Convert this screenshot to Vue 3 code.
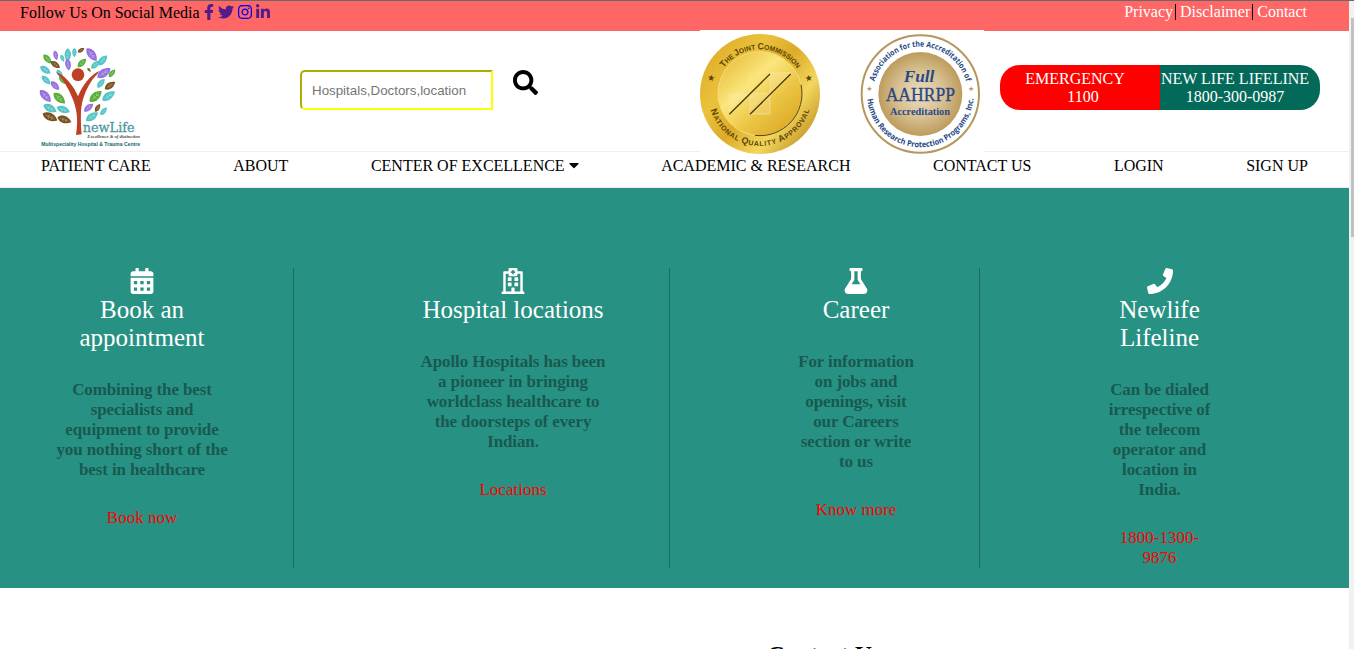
<script setup>
const social = [
  { name: 'facebook', w: 320, cls: 'visited', d: 'M279.14 288l14.22-92.66h-88.91v-60.13c0-25.35 12.42-50.06 52.24-50.06h40.42V6.26S260.43 0 225.36 0c-73.22 0-121.08 44.38-121.08 124.72v70.62H22.89V288h81.39v224h100.17V288z' },
  { name: 'twitter', w: 512, cls: 'visited', d: 'M459.37 151.716c.325 4.548.325 9.097.325 13.645 0 138.72-105.583 298.558-298.558 298.558-59.452 0-114.68-17.219-161.137-47.106 8.447.974 16.568 1.299 25.34 1.299 49.055 0 94.213-16.568 130.274-44.832-46.132-.975-84.792-31.188-98.112-72.772 6.498.974 12.995 1.624 19.818 1.624 9.421 0 18.843-1.3 27.614-3.573-48.081-9.747-84.143-51.98-84.143-102.985v-1.299c13.969 7.797 30.214 12.67 47.431 13.319-28.264-18.843-46.781-51.005-46.781-87.391 0-19.492 5.197-37.36 14.294-52.954 51.655 63.675 129.3 105.258 216.365 109.807-1.624-7.797-2.599-15.918-2.599-24.04 0-57.828 46.782-104.934 104.934-104.934 30.213 0 57.502 12.67 76.67 33.137 23.715-4.548 46.456-13.32 66.599-25.34-7.798 24.366-24.366 44.833-46.132 57.827 21.117-2.273 41.584-8.122 60.426-16.243-14.292 20.791-32.161 39.308-52.628 54.253z' },
  { name: 'instagram', w: 448, cls: 'link', d: 'M224.1 141c-63.6 0-114.9 51.3-114.9 114.9s51.3 114.9 114.9 114.9S339 319.500 339 255.900 287.700 141 224.100 141zm0 189.600c-41.100 0-74.700-33.500-74.700-74.700s33.500-74.700 74.700-74.700 74.700 33.500 74.700 74.700-33.600 74.700-74.700 74.700zm146.400-194.300c0 14.900-12 26.800-26.800 26.800-14.900 0-26.800-12-26.800-26.800s12-26.800 26.800-26.800 26.800 12 26.800 26.800zm76.100 27.200c-1.700-35.900-9.900-67.700-36.200-93.900-26.200-26.200-58-34.400-93.900-36.200-37-2.100-147.900-2.100-184.900 0-35.800 1.700-67.600 9.900-93.900 36.100s-34.400 58-36.200 93.900c-2.100 37-2.100 147.900 0 184.900 1.700 35.900 9.900 67.700 36.200 93.900s58 34.400 93.900 36.200c37 2.100 147.900 2.100 184.900 0 35.900-1.700 67.700-9.900 93.900-36.200 26.200-26.200 34.400-58 36.200-93.900 2.100-37 2.100-147.800 0-184.800zM398.800 388c-7.800 19.600-22.900 34.700-42.600 42.600-29.500 11.700-99.500 9-132.100 9s-102.700 2.600-132.100-9c-19.600-7.800-34.700-22.900-42.600-42.600-11.700-29.500-9-99.500-9-132.100s-2.600-102.700 9-132.100c7.800-19.600 22.900-34.700 42.600-42.600 29.500-11.700 99.500-9 132.100-9s102.700-2.600 132.100 9c19.600 7.800 34.700 22.900 42.600 42.600 11.700 29.500 9 99.500 9 132.100s2.700 102.700-9 132.100z' },
  { name: 'linkedin', w: 448, cls: 'visited', d: 'M100.28 448H7.4V148.9h92.88zM53.79 108.1C24.09 108.1 0 83.5 0 53.8a53.79 53.79 0 0 1 107.58 0c0 29.7-24.1 54.3-53.79 54.3zM447.9 448h-92.68V302.4c0-34.7-.7-79.2-48.29-79.2-48.29 0-55.69 37.7-55.69 76.7V448h-92.78V148.9h89.08v40.8h1.3c12.4-23.5 42.69-48.3 87.88-48.3 94 0 111.28 61.9 111.28 142.3V448z' },
]

const nav = ['PATIENT CARE', 'ABOUT', 'CENTER OF EXCELLENCE', 'ACADEMIC & RESEARCH', 'CONTACT US', 'LOGIN', 'SIGN UP']

const T = '#53c4c6', P = '#9570dd', G = '#57ae3b', B = '#74501d'
/* x, y, angle, length, colour */
const leaves = [
  [52, 72, 50, 34, G], [77, 61, 78, 28, P], [97, 70, 65, 22, T], [113, 60, 90, 38, T], [133, 53, 90, 26, T],
  [153, 46, -30, 22, B], [185, 59, 52, 46, P], [46, 105, 35, 36, T], [76, 89, 35, 32, B], [114, 89, 80, 34, P],
  [89, 116, 55, 28, T], [48, 135, 45, 34, T], [75, 152, 45, 34, P], [99, 136, 45, 32, G], [156, 84, -45, 34, G],
  [177, 105, 50, 14, B], [196, 89, -45, 32, T], [218, 76, -48, 38, T], [196, 119, -35, 16, T], [222, 114, -35, 46, P],
  [246, 115, -50, 28, G], [213, 145, -50, 32, T], [240, 152, -35, 36, B], [46, 183, 48, 46, P], [88, 190, 42, 44, G],
  [60, 220, 28, 42, T], [100, 224, 20, 40, T], [60, 246, 25, 46, B], [103, 254, 20, 42, B],
  [197, 184, -42, 46, G], [236, 183, -35, 44, T], [176, 218, -40, 34, P], [203, 219, -60, 26, B], [221, 229, -50, 28, T], [186, 245, -35, 42, T],
]

const cards = [
  {
    key: 'appointment', title: ['Book an', 'appointment'],
    text: ['Combining the best', 'specialists and', 'equipment to provide', 'you nothing short of the', 'best in healthcare'],
    link: ['Book now'],
  },
  {
    key: 'locations', title: ['Hospital locations'],
    text: ['Apollo Hospitals has been', 'a pioneer in bringing', 'worldclass healthcare to', 'the doorsteps of every', 'Indian.'],
    link: ['Locations'],
  },
  {
    key: 'career', title: ['Career'],
    text: ['For information', 'on jobs and', 'openings, visit', 'our Careers', 'section or write', 'to us'],
    link: ['Know more'],
  },
  {
    key: 'lifeline', title: ['Newlife', 'Lifeline'],
    text: ['Can be dialed', 'irrespective of', 'the telecom', 'operator and', 'location in', 'India.'],
    link: ['1800-1300-', '9876'],
  },
]
</script>

<template>
  <div class="window">
    <div class="page">
      <div class="topbar">
        <div class="follow">
          <span>Follow Us On Social Media</span>
          <svg v-for="s in social" :key="s.name" :class="['soc', s.name, s.cls]" :viewBox="`0 0 ${s.w} 512`"><path :d="s.d" /></svg>
        </div>
        <div class="legal">
          <a>Privacy</a><a>Disclaimer</a><a>Contact</a>
        </div>
      </div>

      <header class="header">
        <svg class="logo" viewBox="0 0 390 360">
          <g v-for="(l, i) in leaves" :key="i" :transform="`translate(${l[0]} ${l[1]}) rotate(${l[2]}) scale(${l[3] / 40})`">
            <path d="M-21 0C-12 -14 8 -14 21 0C8 13 -12 13 -21 0Z" :fill="l[4]" />
            <path d="M-14 0H13M-6 0l5 -6M-6 0l5 6M3 0l5 -5M3 0l5 5" stroke="#fff" stroke-opacity=".4" stroke-width="1.6" fill="none" />
          </g>
          <circle cx="144" cy="119" r="19" fill="#bc4023" />
          <path d="M78 111C104 120 132 153 144 184C158 151 180 119 210 107C174 143 154 190 153 231C152 263 154 284 155 298L138 300C146 250 139 217 126 187C115 158 98 132 78 111Z" fill="#bc4023" />
          <text class="brand" x="158" y="291" textLength="156" lengthAdjust="spacingAndGlyphs">newLife</text>
          <text class="slogan" x="172" y="308" textLength="158" lengthAdjust="spacingAndGlyphs">Excellence &amp; of distinction</text>
          <text class="tagline" x="34" y="332" textLength="296" lengthAdjust="spacingAndGlyphs">Multispeciality Hospital &amp; Trauma Centre</text>
        </svg>

        <div class="search">
          <input type="text" placeholder="Hospitals,Doctors,location" />
          <svg class="search-icon" viewBox="0 0 512 512"><path d="M505 442.700L405.300 343c-4.500-4.500-10.600-7-17-7H372c27.600-35.300 44-79.700 44-128C416 93.100 322.900 0 208 0S0 93.100 0 208s93.100 208 208 208c48.300 0 92.700-16.400 128-44v16.300c0 6.400 2.500 12.500 7 17l99.700 99.700c9.400 9.400 24.600 9.400 33.900 0l28.300-28.300c9.400-9.400 9.400-24.600.1-34zM208 336c-70.700 0-128-57.200-128-128 0-70.700 57.200-128 128-128 70.700 0 128 57.200 128 128 0 70.700-57.200 128-128 128z" /></svg>
        </div>

        <div class="badges">
          <svg class="badge" viewBox="0 0 360 360">
            <defs>
              <linearGradient id="rim" x1="0" y1="0.1" x2="1" y2="0.9">
                <stop offset="0" stop-color="#dca823" /><stop offset=".3" stop-color="#ebc23c" /><stop offset=".5" stop-color="#dcab28" /><stop offset=".72" stop-color="#f2d75e" /><stop offset="1" stop-color="#b98110" />
              </linearGradient>
              <linearGradient id="disc" x1="0" y1="0" x2=".9" y2="1">
                <stop offset="0" stop-color="#e2b42e" /><stop offset=".4" stop-color="#fbe67c" /><stop offset=".65" stop-color="#ecc545" /><stop offset="1" stop-color="#d8a420" />
              </linearGradient>
              <path id="goldTop" d="M46 180A134 134 0 0 1 314 180" />
              <path id="goldBottom" d="M24 180A156 156 0 0 0 336 180" />
            </defs>
            <circle cx="180" cy="180" r="180" fill="url(#rim)" />
            <circle cx="180" cy="179" r="126" fill="url(#disc)" stroke="#f6dd7c" stroke-width="3" />
            <path d="M303 152A126 126 0 0 1 165 304" fill="none" stroke="#514208" stroke-width="3" />
            <path d="M150 116H272L210 178V240H150V178H87V240L150 178H210V116M150 116V178" fill="#fff" fill-opacity=".16" stroke="#f7e59a" stroke-width="2" />
            <path d="M88 241L210 120M150 241L272 120" stroke="#4c3b07" stroke-width="4" />
            <text class="gold-text"><textPath href="#goldTop" startOffset="20%" textLength="256" lengthAdjust="spacingAndGlyphs"><tspan class="big">T</tspan>HE <tspan class="big">J</tspan>OINT <tspan class="big">C</tspan>OMMISSION</textPath></text>
            <text class="gold-text"><textPath href="#goldBottom" startOffset="10%" textLength="392" lengthAdjust="spacing"><tspan class="big">N</tspan>ATIONAL <tspan class="big">Q</tspan>UALITY <tspan class="big">A</tspan>PPROVAL</textPath></text>
            <text class="gold-star" x="22" y="141" transform="rotate(10 34 132)">★</text>
            <text class="gold-star" x="314" y="141" transform="rotate(-10 326 132)">★</text>
          </svg>
          <svg class="badge" viewBox="0 0 360 360">
            <defs>
              <radialGradient id="tan"><stop offset="0" stop-color="#ebdfc2" /><stop offset=".55" stop-color="#d8c193" /><stop offset="1" stop-color="#bd9c5c" /></radialGradient>
              <path id="blueTop" d="M39 180A142 142 0 0 1 323 180" />
              <path id="blueBottom" d="M21 180A160 160 0 0 0 341 180" />
            </defs>
            <circle cx="181" cy="180" r="176" fill="#fff" stroke="#b5975d" stroke-width="6" />
            <circle cx="181" cy="180" r="126" fill="url(#tan)" />
            <text class="blue-text"><textPath href="#blueTop" startOffset="8.500%" textLength="370" lengthAdjust="spacingAndGlyphs">Association for the Accreditation of</textPath></text>
            <text class="blue-text"><textPath href="#blueBottom" startOffset="3%" textLength="474" lengthAdjust="spacingAndGlyphs">Human Research Protection Programs, Inc.</textPath></text>
            <text class="tan-star" x="19" y="171">★</text>
            <text class="tan-star" x="324" y="171">★</text>
            <text class="full" x="131" y="145" textLength="92" lengthAdjust="spacingAndGlyphs">Full</text>
            <text class="aahrpp" x="77" y="200" textLength="208" lengthAdjust="spacingAndGlyphs">AAHRPP</text>
            <text class="accr" x="90" y="243" textLength="180" lengthAdjust="spacingAndGlyphs">Accreditation</text>
          </svg>
        </div>

        <div class="phones">
          <div class="phone red"><span>EMERGENCY</span><span class="num">1100</span></div>
          <div class="phone green"><span>NEW LIFE LIFELINE</span><span>1800-300-0987</span></div>
        </div>
      </header>

      <nav class="nav">
        <a v-for="(n, i) in nav" :key="n">{{ n }}<svg v-if="i === 2" class="caret" viewBox="0 0 320 512"><path d="M31.300 192h257.300c17.800 0 26.700 21.500 14.100 34.100L174.100 354.800c-7.800 7.800-20.500 7.800-28.300 0L17.200 226.100C4.600 213.500 13.500 192 31.300 192z" /></svg></a>
      </nav>

      <section class="hero">
        <article v-for="c in cards" :key="c.key" :class="['card', c.key]">
          <svg v-if="c.key === 'appointment'" class="icon" viewBox="0 0 448 512">
            <path fill-rule="evenodd" d="M0 192h448v272c0 26.500-21.500 48-48 48H48c-26.500 0-48-21.500-48-48zM64 256v64h64v-64zM192 256v64h64v-64zM320 256v64h64v-64zM64 384v64h64v-64zM192 384v64h64v-64zM320 384v64h64v-64zM448 160H0v-48c0-26.500 21.500-48 48-48h48V12c0-6.600 5.400-12 12-12h40c6.600 0 12 5.400 12 12v52h128V12c0-6.600 5.400-12 12-12h40c6.600 0 12 5.400 12 12v52h48c26.500 0 48 21.500 48 48z" />
          </svg>
          <svg v-else-if="c.key === 'locations'" class="icon" viewBox="0 0 448 512">
            <path fill-rule="evenodd" d="M160 0h128c13 0 24 11 24 24v40h80c13 0 24 8 24 20v380h20c7 0 12 5 12 12v36H0v-36c0-7 5-12 12-12h20V84c0-12 11-20 24-20h80V24c0-13 11-24 24-24zM80 112v351h112v-67c0-7 5-12 12-12h40c7 0 12 5 12 12v67h112V112h-56v24c0 13-11 24-24 24H160c-13 0-24-11-24-24v-24zM208 38v26h-26v32h26v26h32V96h26V64h-26V38z" />
            <rect x="122" y="184" width="74" height="74" rx="12" /><rect x="252" y="184" width="74" height="74" rx="12" />
            <rect x="122" y="284" width="74" height="74" rx="12" /><rect x="252" y="284" width="74" height="74" rx="12" />
          </svg>
          <svg v-else-if="c.key === 'career'" class="icon" viewBox="0 0 448 512">
            <path d="M437.200 403.500L320 215V64h8c13.300 0 24-10.700 24-24V24c0-13.300-10.700-24-24-24H120c-13.300 0-24 10.700-24 24v16c0 13.300 10.700 24 24 24h8v151L10.800 403.500C-18.500 450.600 15.300 512 70.900 512h306.200c55.700 0 89.400-61.500 60.100-108.500zM137.900 320l48.200-77.600c3.700-5.200 5.800-11.600 5.800-18.400V64h64v160c0 6.900 2.200 13.200 5.800 18.400l48.200 77.600h-172z" />
          </svg>
          <svg v-else class="icon" viewBox="0 0 512 512">
            <path d="M493.400 24.600l-104-24c-11.300-2.600-22.900 3.300-27.500 13.900l-48 112c-4.200 9.800-1.400 21.300 6.900 28l60.600 49.600c-36 76.700-98.900 140.500-177.200 177.200l-49.600-60.600c-6.800-8.300-18.200-11.100-28-6.900l-112 48C3.900 366.500-2 378.100.6 389.400l24 104C27.100 504.200 36.700 512 48 512c256.100 0 464-207.500 464-464 0-11.200-7.700-20.900-18.600-23.400z" />
          </svg>
          <h2><span v-for="t in c.title" :key="t">{{ t }}</span></h2>
          <p><span v-for="t in c.text" :key="t">{{ t }}</span></p>
          <a><span v-for="t in c.link" :key="t">{{ t }}</span></a>
        </article>
      </section>

      <h1 class="contact">Contact Us</h1>
    </div>
    <div class="scroll"><div class="thumb"></div></div>
  </div>
</template>

<style>
html, body { margin: 0; overflow: hidden; background: #fff; }
</style>

<style scoped>
.window {
  display: flex;
  width: 1354px;
  height: 649px;
  overflow: hidden;
  box-sizing: border-box;
  border-top: 1px solid #696969;
  font-family: "Liberation Serif", "Times New Roman", serif;
  font-size: 16px;
  color: #000;
}
.page { width: 1349px; flex: none; overflow: hidden; }
.scroll { width: 5px; background: #f1f1f1; display: flex; justify-content: flex-end; }
.thumb { width: 3px; height: 219px; margin-top: 17px; background: #c1c1c1; }

.topbar {
  height: 30px;
  background: #ff6666;
  display: flex;
  justify-content: space-between;
  box-sizing: border-box;
  padding: 2px 42px 0 20px;
}
.follow { display: flex; height: 20px; line-height: 20px; font-size: 16px; white-space: nowrap; }
.soc { height: 16px; margin: 1px 0 0 4px; }
.facebook { width: 10px; }
.twitter { width: 16px; }
.instagram, .linkedin { width: 14px; }
.visited { fill: #551a8b; }
.link { fill: #0000ee; }
.legal { display: flex; color: #fff; line-height: 16px; padding-top: 1px; }
.legal a { height: 16px; }
.legal a + a { border-left: 1px solid #000; margin-left: 2px; padding-left: 4px; }
.legal a:last-child { padding-left: 4px; margin-left: 2px; }

.header { height: 120px; display: flex; border-bottom: 1px solid #eeeef0; }
.logo { width: 130px; height: 120px; margin: 4px 0 0 30px; flex: none; }
.brand { font: 40px "DejaVu Serif", serif; fill: #5098a0; stroke: #5098a0; stroke-width: 1; }
.slogan { font: italic bold 12px "Liberation Serif", serif; fill: #444; }
.tagline { font: bold 15px "Liberation Sans", sans-serif; fill: #15686b; }

.search { display: flex; margin: 39px 0 0 140px; width: 238px; }
.search input {
  box-sizing: border-box;
  width: 193px;
  height: 40px;
  border: 2px solid #ffff00;
  border-top-color: #adad00;
  border-left-color: #adad00;
  border-radius: 5px 0 0 5px;
  padding: 1px 10px;
  font: 13.333px "Liberation Sans", Arial, sans-serif;
  outline: none;
}
.search input::placeholder { color: #757575; opacity: 1; }
.search-icon { width: 25px; height: 25px; margin-left: 20px; }

.badges {
  display: flex;
  gap: 40px;
  box-sizing: border-box;
  width: 284px;
  height: 125px;
  margin: -1px 0 0 162px;
  padding-top: 4px;
  background: #fff;
  position: relative;
  flex: none;
}
.badge { width: 120px; height: 120px; flex: none; }
.gold-text { font: bold 21px "Liberation Sans", sans-serif; fill: #5b4306; }
.big { font-size: 27px; }
.gold-star { font: 27px "DejaVu Sans", sans-serif; fill: #5b4306; }
.blue-text { font: bold 24px "Open Sans", sans-serif; fill: #274884; }
.tan-star { font: 21px "DejaVu Sans", sans-serif; fill: #b5975d; }
.full { font: italic bold 51px "Liberation Serif", serif; fill: #2a4886; }
.aahrpp { font: 59px "Liberation Serif", serif; fill: #2a4886; stroke: #2a4886; stroke-width: 1; }
.accr { font: bold 29px "Liberation Serif", serif; fill: #2a4886; }

.phones { display: flex; margin: 34px 0 0 16px; width: 320px; height: 45px; border-radius: 20px; overflow: hidden; color: #fff; }
.phone { box-sizing: border-box; display: flex; flex-direction: column; align-items: center; width: 160px; padding: 5px 10px 0 0; line-height: 18px; white-space: nowrap; }
.red { background: #ff0000; }
.green { background: #036a5a; }
.num { padding-left: 16px; }

.nav { display: flex; justify-content: space-between; height: 36px; padding: 5px 41px 0; box-sizing: border-box; border-bottom: 1px solid #e9e9e9; line-height: 18px; }
.nav a { display: flex; white-space: nowrap; }
.caret { width: 10px; height: 16px; margin-left: 4px; }

.hero { display: flex; box-sizing: border-box; height: 400px; padding: 80px 10px 20px 0; background: #279283; }
.card { box-sizing: border-box; display: flex; flex-direction: column; align-items: center; border-right: 1px solid #156c60; text-align: center; white-space: nowrap; }
.card span { display: block; }
.appointment { width: 294px; padding-right: 9px; }
.locations { width: 376px; padding-left: 63px; }
.career { width: 310px; padding-left: 63px; }
.lifeline { width: 359px; border-right: 0; }
.icon { height: 26px; width: 26px; fill: #fff; flex: none; }
.card h2 { margin: 2px 0 0; font-size: 25px; font-weight: normal; line-height: 28px; color: #fff; }
.card p { margin: 28px 0; font-size: 17px; font-weight: bold; line-height: 20px; letter-spacing: -0.11px; color: #19594f; }
.card a { font-size: 17px; line-height: 20px; color: #ff0000; }

.contact { margin: 53px 0 0 300px; text-align: center; font-size: 24px; line-height: 27px; }
</style>
